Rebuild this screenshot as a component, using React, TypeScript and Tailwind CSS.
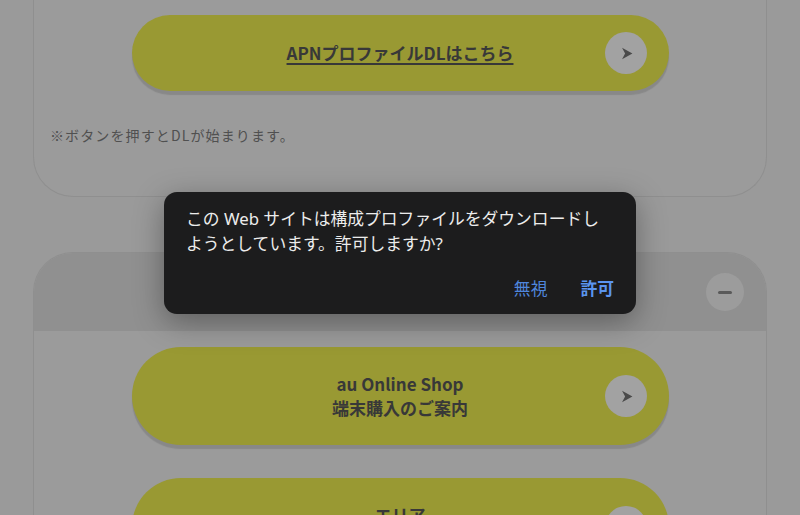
import React from 'react';

const Arrow = () => (
    <svg width="12" height="13" viewBox="0 0 10 11" className="ml-[2px]">
        <path d="M0.8 0.6 L9.6 5.5 L0.8 10.4 L3.4 5.5 Z" fill="#4a4a4a" />
    </svg>
);

const PillButton = ({ children, tall = false, underline = false }: { children: React.ReactNode, tall?: boolean, underline?: boolean }) => (
    <div className={`relative mx-auto w-[537px] ${tall ? 'h-[98px]' : 'h-[76px]'} rounded-full bg-[#999933] shadow-[0_4px_1px_rgba(0,0,0,0.12)] flex items-center justify-center`}>
        <div className={`text-center text-[17px] leading-[24px] font-bold text-[#383838] ${underline ? 'underline underline-offset-[3px] decoration-[1.5px]' : ''}`}>
            {children}
        </div>
        <div className="absolute right-[22px] top-1/2 -translate-y-1/2 w-[42px] h-[42px] rounded-full bg-[#a2a2a2] flex items-center justify-center">
            <Arrow />
        </div>
    </div>
);

export default function App() {
    return (
        <div className="relative w-[800px] h-[515px] overflow-hidden bg-[#9a9a9a]" style={{ fontFamily: '"Noto Sans CJK JP", "Noto Sans", sans-serif' }}>
            <div className="px-[33px] flex flex-col gap-[55px]">
                {/* first card, scrolled so its top is off screen */}
                <div className="rounded-b-[40px] border-x border-b border-[#8f8f8f] bg-[#9b9b9b] pt-[15px] pb-[51px]">
                    <PillButton underline>APNプロファイルDLはこちら</PillButton>
                    <p className="mt-[34px] pl-[16px] text-[14px] leading-[20px] tracking-[0.08em] text-[#505050]">※ボタンを押すとDLが始まります。</p>
                </div>

                {/* second card */}
                <div className="rounded-t-[40px] border-x border-t border-[#8f8f8f] bg-[#9b9b9b] overflow-hidden">
                    <div className="h-[78px] bg-[#909090] flex items-center justify-end pr-[22px]">
                        <div className="w-[38px] h-[38px] rounded-full bg-[#9c9c9c] flex items-center justify-center">
                            <div className="w-[14px] h-[3px] rounded-full bg-[#5a5a5a]" />
                        </div>
                    </div>
                    <div className="pt-[16px] flex flex-col gap-[33px]">
                        <PillButton tall>
                            <div>au Online Shop</div>
                            <div>端末購入のご案内</div>
                        </PillButton>
                        <PillButton tall>
                            <div>エリア</div>
                            <div>&nbsp;</div>
                        </PillButton>
                    </div>
                </div>
            </div>

            {/* download permission dialog */}
            <div className="absolute left-[164px] top-[192px] w-[472px] h-[122px] rounded-[13px] bg-[#1c1c1d] shadow-[0_8px_30px_rgba(0,0,0,0.35)] px-[22px] pt-[14px] flex flex-col">
                <p className="whitespace-nowrap text-[16.8px] leading-[25px] text-[#ececec]" style={{ fontFamily: '"Noto Sans", "Noto Sans CJK JP", sans-serif' }}>
                    この Web サイトは構成プロファイルをダウンロードし<br />ようとしています。許可しますか?
                </p>
                <div className="mt-auto mb-[14px] flex justify-end gap-[33px] text-[16.8px] leading-[24px]">
                    <span className="text-[#4f86dc]">無視</span>
                    <span className="font-bold text-[#5b95ef]">許可</span>
                </div>
            </div>
        </div>
    );
}
